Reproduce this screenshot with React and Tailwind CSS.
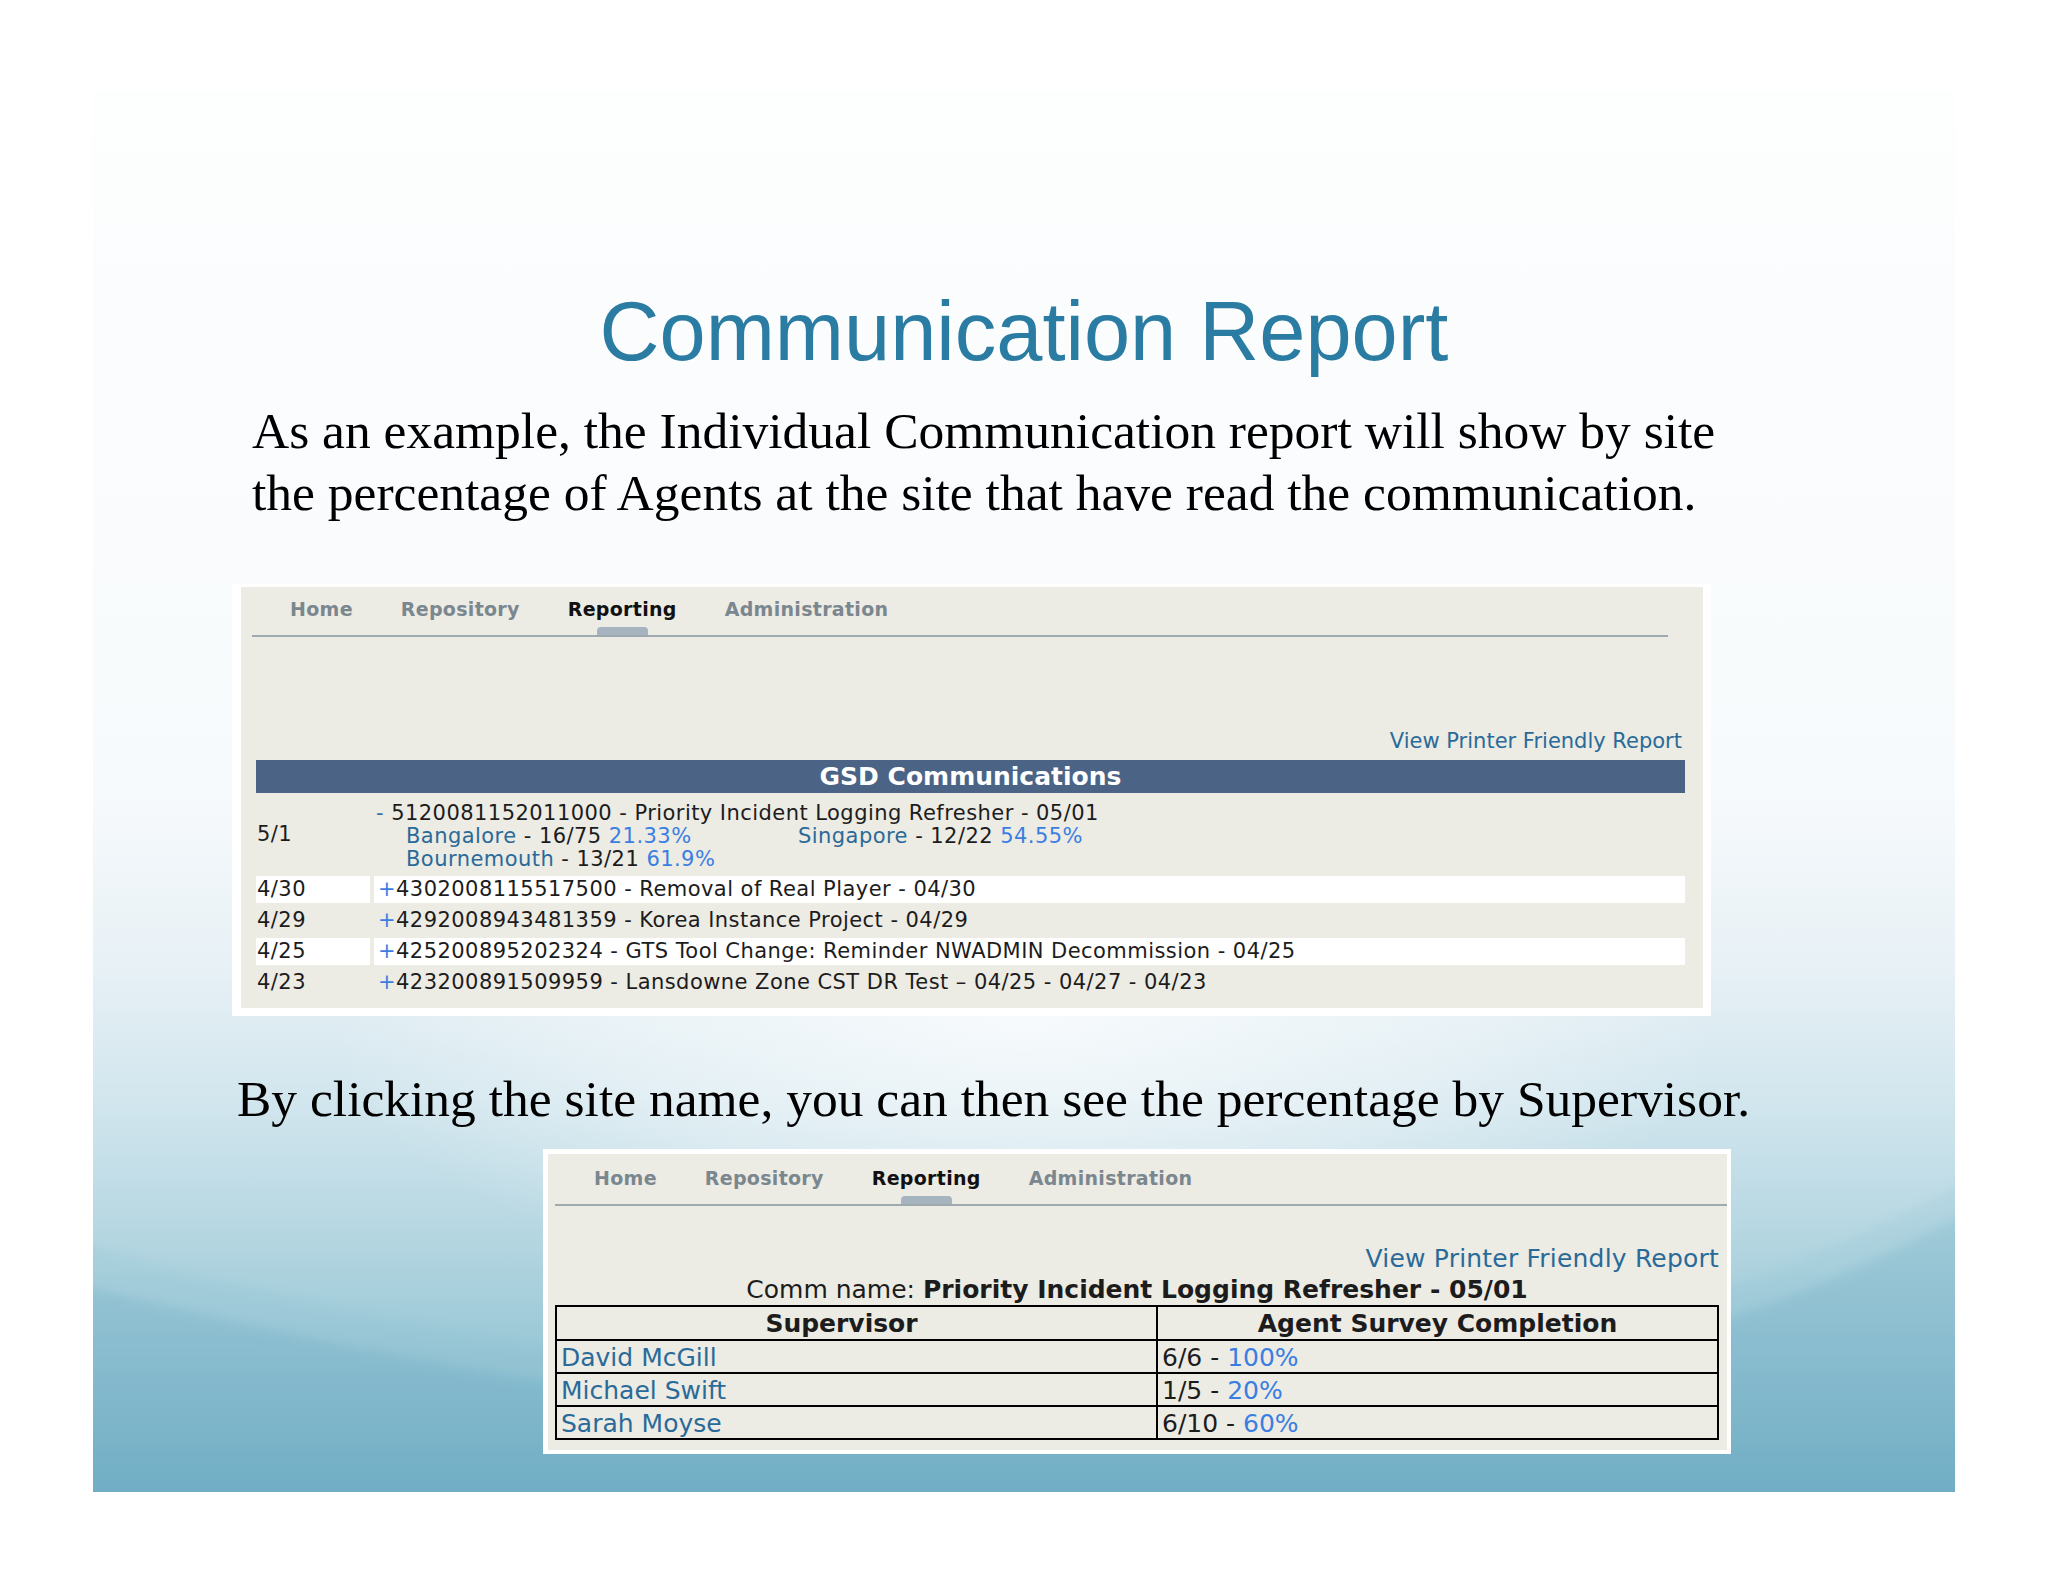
import React from "react";

function Tabs({ navClass }) {
  const tabs = ["Home", "Repository", "Reporting", "Administration"];
  return (
    <div className={navClass}>
      {tabs.map((t) => (
        <div key={t} className="flex flex-col items-center">
          <span
            className={
              t === "Reporting"
                ? "leading-[22px] text-[#111111]"
                : "leading-[22px] text-[#7b878f]"
            }
          >
            {t}
          </span>
          <div
            className={
              t === "Reporting"
                ? "mt-[7px] h-[8px] w-[51px] rounded-t-[4px] bg-[#a6b4bf]"
                : "mt-[7px] h-[8px] w-[51px]"
            }
          />
        </div>
      ))}
    </div>
  );
}

function Site({ name, count, pct }) {
  return (
    <div className="whitespace-nowrap">
      <span className="text-[#2a6a98]">{name}</span> - {count}{" "}
      <span className="text-[#3b7ee2]">{pct}</span>
    </div>
  );
}

function Row({ date, id, text, white }) {
  return (
    <div className="flex gap-[4px] h-[27px] leading-[27px]">
      <div className={white ? "w-[114px] bg-white pl-[1px]" : "w-[114px] pl-[1px]"}>{date}</div>
      <div className={white ? "flex-1 bg-white pl-[4px] whitespace-nowrap" : "flex-1 pl-[4px] whitespace-nowrap"}>
        <span className="text-[#3b7ee2]">+</span>
        {id} - {text}
      </div>
    </div>
  );
}

function Background() {
  return (
    <svg
      className="absolute inset-0"
      width="1862"
      height="1401"
      viewBox="0 0 1862 1401"
      preserveAspectRatio="none"
    >
      <defs>
        <linearGradient id="bgv" x1="0" y1="0" x2="0" y2="1">
          <stop offset="0" stopColor="#fdfefe" />
          <stop offset="0.5" stopColor="#f7fafc" />
          <stop offset="0.62" stopColor="#e8f1f6" />
          <stop offset="0.72" stopColor="#d2e6ee" />
          <stop offset="0.82" stopColor="#b4d6e1" />
          <stop offset="0.92" stopColor="#92c3d3" />
          <stop offset="1" stopColor="#78b2c8" />
        </linearGradient>
        <radialGradient id="glow" cx="0.5" cy="0.66" r="0.5" gradientTransform="translate(0.5 0.66) scale(0.75 0.42) translate(-0.5 -0.66)">
          <stop offset="0" stopColor="#ffffff" stopOpacity="0.75" />
          <stop offset="0.6" stopColor="#ffffff" stopOpacity="0.35" />
          <stop offset="1" stopColor="#ffffff" stopOpacity="0" />
        </radialGradient>
        <linearGradient id="w1" x1="0" y1="0" x2="0" y2="1">
          <stop offset="0" stopColor="#a6cfdc" />
          <stop offset="1" stopColor="#7ab4c9" />
        </linearGradient>
        <linearGradient id="w2" x1="0" y1="0" x2="0" y2="1">
          <stop offset="0" stopColor="#8fc1d1" />
          <stop offset="1" stopColor="#64a4bf" />
        </linearGradient>
        <filter id="soft" x="-5%" y="-5%" width="110%" height="110%">
          <feGaussianBlur stdDeviation="5" />
        </filter>
      </defs>
      <rect x="0" y="0" width="1862" height="1401" fill="url(#bgv)" />
      <rect x="0" y="0" width="1862" height="1401" fill="url(#glow)" />
      <path
        d="M-20,1150 C500,1300 1300,1420 1890,1080 L1890,1430 L-20,1430 Z"
        fill="url(#w1)"
        opacity="0.35"
        filter="url(#soft)"
      />
      <path
        d="M-20,1192 C520,1330 1300,1450 1890,1112 L1890,1430 L-20,1430 Z"
        fill="url(#w2)"
        opacity="0.45"
        filter="url(#soft)"
      />
    </svg>
  );
}

export default function App() {
  return (
    <div className="w-[2048px] h-[1586px] bg-white pt-[91px] pl-[93px]">
      <div className="relative w-[1862px] h-[1401px] overflow-hidden">
        <Background />
        <div className="relative flex flex-col">
          <h1 className="mt-[199px] text-center text-[83px] leading-[83px] text-[#2b7ca3] font-['Liberation_Sans',sans-serif] font-normal">
            Communication Report
          </h1>

          <p className="mt-[27px] ml-[159px] text-[51.5px] leading-[62px] text-black font-['Liberation_Serif',serif] whitespace-nowrap">
            As an example, the Individual Communication report will show by site
            <br />
            the percentage of Agents at the site that have read the communication.
          </p>

          {/* Panel 1 */}
          <div className="mt-[60px] ml-[139px] w-[1479px] h-[432px] bg-white pt-[3px] pl-[9px] pr-[8px] pb-[8px]">
            <div className="h-full bg-[#ecebe4] flex flex-col font-['DejaVu_Sans',sans-serif]">
              <Tabs navClass="ml-[11px] w-[1416px] flex gap-[48px] pl-[38px] pt-[11px] border-b-2 border-[#9ea9b0] text-[19px] tracking-[0.3px] font-bold" />
              <div className="mt-[91px] ml-[15px] w-[1429px] pr-[3px] text-right text-[21px] leading-[26px] text-[#2a6a98]">
                View Printer Friendly Report
              </div>
              <div className="mt-[6px] ml-[15px] w-[1429px] h-[33px] bg-[#4b6485] text-white font-bold text-[25px] leading-[33px] text-center">
                GSD Communications
              </div>
              <div className="mt-[4px] ml-[15px] w-[1429px] flex flex-col gap-[4px] text-[21px] tracking-[0.45px] text-[#1c1c1c]">
                <div className="flex gap-[4px]">
                  <div className="w-[114px] flex items-center pl-[1px]">5/1</div>
                  <div className="flex-1 pt-[5px] pb-[1px] pl-[2px] leading-[23px]">
                    <div className="whitespace-nowrap">
                      <span className="text-[#3b6fa8]">-</span> 5120081152011000 - Priority Incident Logging Refresher - 05/01
                    </div>
                    <div className="grid grid-cols-[392px_392px] pl-[30px]">
                      <Site name="Bangalore" count="16/75" pct="21.33%" />
                      <Site name="Singapore" count="12/22" pct="54.55%" />
                      <Site name="Bournemouth" count="13/21" pct="61.9%" />
                    </div>
                  </div>
                </div>
                <Row white date="4/30" id="4302008115517500" text="Removal of Real Player - 04/30" />
                <Row date="4/29" id="4292008943481359" text="Korea Instance Project - 04/29" />
                <Row white date="4/25" id="425200895202324" text="GTS Tool Change: Reminder NWADMIN Decommission - 04/25" />
                <Row date="4/23" id="423200891509959" text="Lansdowne Zone CST DR Test – 04/25 - 04/27 - 04/23" />
              </div>
            </div>
          </div>

          <p className="mt-[52px] ml-[144px] text-[51.5px] leading-[62px] text-black font-['Liberation_Serif',serif] whitespace-nowrap">
            By clicking the site name, you can then see the percentage by Supervisor.
          </p>

          {/* Panel 2 */}
          <div className="mt-[19px] ml-[450px] w-[1188px] h-[305px] bg-white pt-[5px] pl-[5px] pr-[4px] pb-[4px]">
            <div className="h-full bg-[#ecebe4] flex flex-col font-['DejaVu_Sans',sans-serif]">
              <Tabs navClass="ml-[7px] flex gap-[48px] pl-[39px] pt-[13px] border-b-2 border-[#9ea9b0] text-[19px] tracking-[0.3px] font-bold" />
              <div className="mt-[38px] pr-[8px] text-right text-[25px] tracking-[0.2px] leading-[30px] text-[#2a6a98]">
                View Printer Friendly Report
              </div>
              <div className="mt-[1px] ml-[7px] w-[1164px] text-center text-[25px] leading-[30px] text-[#1c1c1c] whitespace-nowrap">
                Comm name: <span className="font-bold">Priority Incident Logging Refresher - 05/01</span>
              </div>
              <table className="ml-[7px] w-[1164px] border-collapse text-[25px] leading-[29px] text-[#1c1c1c]">
                <thead>
                  <tr className="h-[34px]">
                    <th className="w-[601px] border-2 border-black font-bold text-center p-0 pr-[30px]">Supervisor</th>
                    <th className="border-2 border-black font-bold text-center p-0">Agent Survey Completion</th>
                  </tr>
                </thead>
                <tbody>
                  {[
                    ["David McGill", "6/6", "100%"],
                    ["Michael Swift", "1/5", "20%"],
                    ["Sarah Moyse", "6/10", "60%"],
                  ].map(([n, c, p]) => (
                    <tr key={n} className="h-[33px]">
                      <td className="border-2 border-black pl-[4px] pt-[1px] pb-0 text-[#2a6a98]">{n}</td>
                      <td className="border-2 border-black pl-[4px] pt-[1px] pb-0">
                        {c} - <span className="text-[#3b7ee2]">{p}</span>
                      </td>
                    </tr>
                  ))}
                </tbody>
              </table>
            </div>
          </div>
        </div>
      </div>
    </div>
  );
}
